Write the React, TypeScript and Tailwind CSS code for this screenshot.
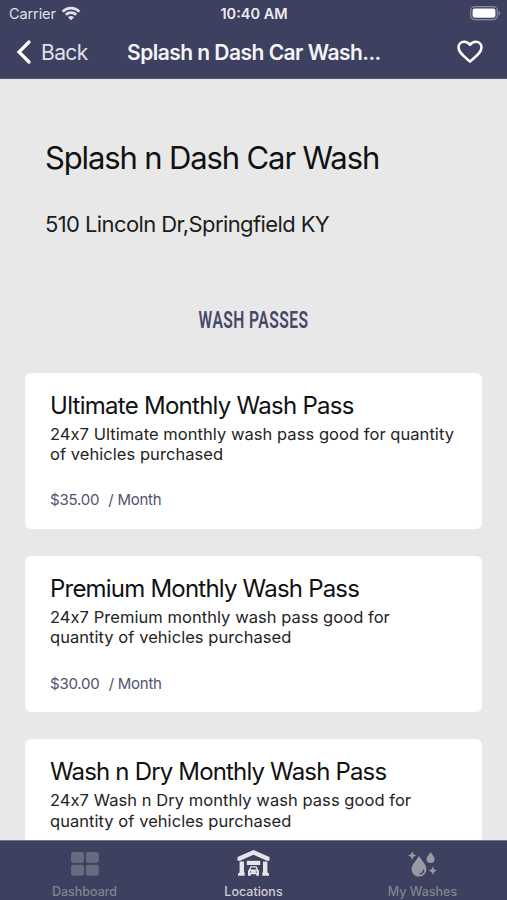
import { Fragment } from "react";
import { clsx } from "clsx";

interface WashPass {
  name: string;
  description: string[];
  price?: string;
  nameTracking: string;
}

const passes: WashPass[] = [
  {
    name: "Ultimate Monthly Wash Pass",
    description: [
      "24x7 Ultimate monthly wash pass good for quantity",
      "of vehicles purchased",
    ],
    price: "$35.00",
    nameTracking: "tracking-[-0.73px]",
  },
  {
    name: "Premium Monthly Wash Pass",
    description: [
      "24x7 Premium monthly wash pass good for",
      "quantity of vehicles purchased",
    ],
    price: "$30.00",
    nameTracking: "tracking-[-0.79px]",
  },
  {
    name: "Wash n Dry Monthly Wash Pass",
    description: [
      "24x7 Wash n Dry monthly wash pass good for",
      "quantity of vehicles purchased",
    ],
    nameTracking: "tracking-[-0.83px]",
  },
];

function WifiIcon() {
  return (
    <svg width="20" height="15" viewBox="0 0 20 15" fill="none" stroke="currentColor" strokeWidth="2.7">
      <path d="M1.6 5.6C6.3 1 13.7 1 18.4 5.6" />
      <path d="M4.8 8.8C7.7 6 12.3 6 15.2 8.8" />
      <path d="M10 14.2L7 11.2C8.7 9.6 11.3 9.6 13 11.2Z" fill="currentColor" stroke="none" />
    </svg>
  );
}

function BatteryIcon() {
  return (
    <svg width="31" height="15" viewBox="0 0 31 15" fill="none">
      <rect x="0.7" y="0.7" width="26.6" height="13" rx="4" stroke="#8b8ca3" strokeWidth="1.2" />
      <rect x="2.6" y="2.6" width="22.8" height="9.2" rx="2.2" fill="#fff" />
      <path d="M28.6 4.8c2 .7 2 4.1 0 4.8z" fill="#8b8ca3" />
    </svg>
  );
}

function ChevronIcon() {
  return (
    <svg width="16" height="26" viewBox="0 0 16 26" fill="none" stroke="currentColor" strokeWidth="3.2">
      <path d="M13 3L3 13l10 10" strokeLinecap="round" strokeLinejoin="miter" />
    </svg>
  );
}

function HeartIcon() {
  return (
    <svg width="26" height="24" viewBox="0 0 26 24" fill="none" stroke="currentColor" strokeWidth="2.5">
      <path
        d="M13 21.6C6.5 15.8 1.5 12.4 1.5 7.5 1.5 4.2 4 1.7 7.2 1.7c2.4 0 4.5 1.2 5.8 3.2 1.3-2 3.4-3.2 5.8-3.2 3.2 0 5.7 2.5 5.7 5.8 0 4.9-5 8.3-11.5 14.1z"
        strokeLinejoin="round"
      />
    </svg>
  );
}

function DashboardIcon() {
  return (
    <svg width="28" height="24" viewBox="0 0 28 24" fill="currentColor">
      <rect x="0" y="0" width="13" height="11" rx="2.4" />
      <rect x="14.8" y="0" width="13" height="11" rx="2.4" />
      <rect x="0" y="12.8" width="13" height="11" rx="2.4" />
      <rect x="14.8" y="12.8" width="13" height="11" rx="2.4" />
    </svg>
  );
}

function GarageIcon() {
  return (
    <svg width="33" height="27" viewBox="0 0 33 27" fill="currentColor">
      <path d="M16.5 0L32.5 7V10.8H30L16.5 4.8 3 10.8H.5V7z" />
      <path d="M2.6 11.6H7V22.6H7.7V25.8H1V23.8L2.6 22.3z" />
      <path d="M30.4 11.6H26V22.6H25.3V25.8H32V23.8L30.4 22.3z" />
      <rect x="9.8" y="10.8" width="13.4" height="4.2" />
      <path
        fillRule="evenodd"
        d="M13.4 16.2h6.2l1.4 3.2 1 1.3v5.1h-2.8v-1.6h-5.4v1.6H11v-5.1l1-1.3zM14.3 17.6l-.8 2h6l-.8-2zM12.8 21.4v1.2h1.6v-1.2zM18.6 21.4v1.2h1.6v-1.2z"
      />
    </svg>
  );
}

function DropsIcon() {
  return (
    <svg width="29" height="26" viewBox="0 0 29 26" fill="currentColor">
      <path d="M11 5C14 10 18.4 13.6 18.4 18.2a7.4 7.4 0 0 1-14.8 0C3.6 13.6 8 10 11 5z" />
      <path d="M22.6 1c1.8 3 4 4.8 4 7.1a4 4 0 0 1-8 0c0-2.3 2.2-4.1 4-7.1z" />
      <path d="M4.2.3l1.3 2.9 2.9 1.3-2.9 1.3-1.3 2.9-1.3-2.9L0 4.500l2.900-1.300z" />
      <path d="M24.800 15.600l1.300 2.700 2.700 1.300-2.700 1.300-1.300 2.700-1.300-2.700-2.700-1.300 2.700-1.300z" />
      <path d="M15.600 18.400c0 2.500-1.600 4.300-3.900 4.600" fill="none" stroke="#3e405f" strokeWidth="1.3" />
    </svg>
  );
}

const tabs = [
  { label: "Dashboard", icon: <DashboardIcon />, className: "text-[#686a80]", labelClass: "text-[#81838f]" },
  { label: "Locations", icon: <GarageIcon />, className: "text-[#e4e5e9]", labelClass: "text-[#cdced8]" },
  { label: "My Washes", icon: <DropsIcon />, className: "text-[#999ba4]", labelClass: "text-[#81838f]" },
];

function PassCard({ pass }: { pass: WashPass }) {
  return (
    <div className="h-[156px] shrink-0 rounded-[6px] bg-white px-[25px] pt-[17px]">
      <h3 className={clsx("text-[24px] leading-[32px] whitespace-nowrap text-[#111]", pass.nameTracking)}>
        {pass.name}
      </h3>
      <p className="mt-[2px] text-[16.5px] leading-[20.4px] tracking-[0.05px] whitespace-nowrap text-[#242424]">
        {pass.description.map((line, i) => (
          <Fragment key={line}>
            {i > 0 && <br />}
            {line}
          </Fragment>
        ))}
      </p>
      {pass.price && (
        <div className="mt-[26px] flex gap-[9px] text-[15px] leading-5 text-[#51526f]">
          <span className="tracking-[-0.2px]">{pass.price}</span>
          <span className="tracking-[-0.25px]">/ Month</span>
        </div>
      )}
    </div>
  );
}

export default function App() {
  return (
    <div className="flex h-[900px] w-[507px] flex-col overflow-hidden bg-[#e8e8e8] font-['Inter',sans-serif]">
      <header className="h-[79px] shrink-0 border-b border-[#55567a] bg-[#3e405f] text-white">
        {/* Status bar */}
        <div className="grid h-[27px] grid-cols-3 items-center pr-[6px] pl-[9px] text-[14.5px] whitespace-nowrap">
          <div className="flex items-center gap-[5px] tracking-[-0.1px] text-[#dfe0e8]">
            <span>Carrier</span>
            <WifiIcon />
          </div>
          <span className="pr-[2px] text-center font-semibold text-[#ececf2]">10:40 AM</span>
          <div className="flex justify-end">
            <BatteryIcon />
          </div>
        </div>
        {/* Navigation bar */}
        <div className="flex h-[50px] items-center pr-[24px] pl-[16px] whitespace-nowrap">
          <div className="flex w-[111px] items-center gap-[9px]">
            <ChevronIcon />
            <span className="pt-[2px] text-[21px] tracking-[-0.6px] text-[#dfe0e8]">Back</span>
          </div>
          <h1 className="flex-1 pt-[2px] text-[21px] font-semibold tracking-[-0.53px] text-[#f4f4f8]">
            Splash n Dash Car Wash...
          </h1>
          <HeartIcon />
        </div>
      </header>

      <main className="flex flex-1 flex-col overflow-hidden px-[25px]">
        <div className="px-[20px] pt-[59px] whitespace-nowrap">
          <h2 className="text-[31px] leading-[40px] tracking-[-1.13px] text-[#111]">Splash n Dash Car Wash</h2>
          <p className="mt-[31px] text-[22px] leading-[30px] tracking-[-0.6px] text-[#1c1c1c]">
            510 Lincoln Dr,Springfield KY
          </p>
        </div>
        <div className="mt-[66px] flex h-[30px] justify-center">
          <span className="scale-x-[0.65] font-['Roboto',sans-serif] text-[24px] leading-[30px] font-semibold tracking-[0.7px] whitespace-nowrap text-[#464769]">
            WASH PASSES
          </span>
        </div>
        <div className="mt-[37.6px] flex flex-col gap-[27.3px]">
          {passes.map((pass) => (
            <PassCard key={pass.name} pass={pass} />
          ))}
        </div>
      </main>

      <nav className="grid h-[60px] shrink-0 grid-cols-3 border-t border-[#70728a] bg-[#3e405f]">
        {tabs.map((tab) => (
          <div key={tab.label} className={clsx("flex flex-col items-center pt-[8px]", tab.className)}>
            <div className="flex h-[29px] items-center">{tab.icon}</div>
            <span className={clsx("mt-[6px] text-[12.5px] leading-4 font-medium", tab.labelClass)}>
              {tab.label}
            </span>
          </div>
        ))}
      </nav>
    </div>
  );
}
